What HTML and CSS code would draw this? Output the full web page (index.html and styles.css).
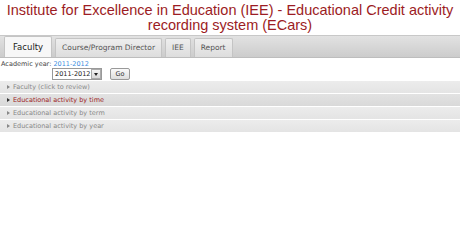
FILE: index.html
```html
<!DOCTYPE html>
<html lang="en">
<head>
    <meta charset="UTF-8">
    <title>ECars</title>
    <link rel="stylesheet" href="styles.css">
</head>
<body>
    <h1 class="title">Institute for Excellence in Education (IEE) - Educational Credit activity recording system (ECars)</h1>

    <div class="tabs">
        <div class="tab active">Faculty</div>
        <div class="tab">Course/Program Director</div>
        <div class="tab">IEE</div>
        <div class="tab">Report</div>
    </div>

    <div class="year-form">
        <div class="year-label">Academic year: <a href="#">2011-2012</a></div>
        <div class="year-controls">
            <span class="select-box">
                <select class="year-select">
                    <option>2011-2012</option>
                </select>
                <span class="select-arrow"></span>
            </span>
            <button class="go-btn">Go</button>
        </div>
    </div>

    <div class="accordion">
        <div class="acc-row">Faculty (click to review)</div>
        <div class="acc-row open">Educational activity by time</div>
        <div class="acc-row">Educational activity by term</div>
        <div class="acc-row">Educational activity by year</div>
    </div>
</body>
</html>
```

FILE: styles.css
```css
body {
    margin: 0;
    font-family: "DejaVu Sans", Verdana, sans-serif;
    background-color: white;
}
.title {
    font-family: "Liberation Sans", Arial, sans-serif;
    font-weight: normal;
    font-size: 14.5px;
    line-height: 15px;
    color: #9c1c24;
    text-align: center;
    margin: 3px 0 2px 0;
}
.tabs {
    display: flex;
    gap: 3px;
    height: 21px;
    padding: 0 4px;
    border-top: 1px solid #c8c8c8;
    background: linear-gradient(#e2e2e2, #cccccc);
    border-bottom: 1px solid #bdbdbd;
    align-items: flex-end;
}
.tab {
    font-size: 7.5px;
    color: #555;
    padding: 0 6px;
    height: 18px;
    line-height: 18px;
    background: linear-gradient(#eeeeee, #dddddd);
    border: 1px solid #c4c4c4;
    border-bottom: none;
    border-radius: 2px 2px 0 0;
}
.tab.active {
    color: #222;
    font-size: 8.5px;
    background: #f7f7f7;
    height: 20px;
    line-height: 21px;
    padding: 0 8px;
}
.year-form {
    padding: 2px 1px 1px 1px;
    font-size: 6.5px;
    color: #444;
}
.year-label a {
    color: #3b8ee0;
    text-decoration: none;
}
.year-controls {
    display: flex;
    gap: 8px;
    margin: 0 0 0 51px;
    align-items: center;
}
.select-box {
    position: relative;
    display: inline-block;
    width: 50px;
    height: 12px;
}
.year-select {
    font-family: "DejaVu Sans", Verdana, sans-serif;
    font-size: 6.5px;
    color: #222;
    appearance: none;
    width: 50px;
    height: 12px;
    padding: 0 0 0 2px;
    border: 1px solid #999;
    border-radius: 0;
    background: white;
}
.select-arrow {
    position: absolute;
    right: 1px;
    top: 1px;
    width: 10px;
    height: 10px;
    box-sizing: border-box;
    border: 1px solid #aaa;
    background: linear-gradient(#f4f4f4, #d8d8d8);
}
.select-arrow::after {
    content: "";
    position: absolute;
    left: 2px;
    top: 3px;
    border-top: 3px solid #222;
    border-left: 2px solid transparent;
    border-right: 2px solid transparent;
}
.go-btn {
    font-family: "DejaVu Sans", Verdana, sans-serif;
    font-size: 6.5px;
    color: #333;
    height: 12px;
    width: 20px;
    padding: 0;
    border: 1px solid #999;
    border-radius: 2px;
    background: linear-gradient(#fafafa, #dddddd);
}
.accordion {
    display: flex;
    flex-direction: column;
    gap: 1px;
}
.acc-row {
    height: 12px;
    line-height: 12px;
    font-size: 6.5px;
    color: #888;
    padding-left: 13px;
    position: relative;
    background: linear-gradient(#ececec, #e4e4e4);
}
.acc-row::before {
    content: "";
    position: absolute;
    left: 7px;
    top: 4px;
    border-left: 3px solid #888;
    border-top: 2px solid transparent;
    border-bottom: 2px solid transparent;
}
.acc-row.open {
    color: #9c1c24;
    background: linear-gradient(#e2e2e2, #d9d9d9);
}
.acc-row.open::before {
    border-left-color: #333;
}
```
